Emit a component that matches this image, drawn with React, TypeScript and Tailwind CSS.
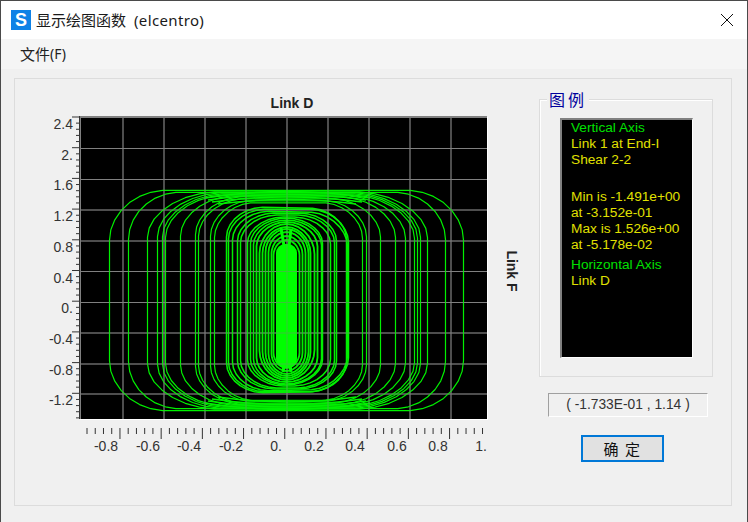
const CX = 286.5;

// left half width, right half width, top, bottom of each hysteresis loop
const LOOPS: number[][] = [
  [177, 177, 187, 414], [158, 159, 189, 412], [139, 141, 190, 411], [129, 134, 191, 410],
  [124, 131, 192, 409], [121, 128, 193, 408], [106, 119, 194, 407], [91, 109, 195, 406],
  [88, 94, 197, 405], [76, 80, 199, 403], [72, 76, 201, 402], [60, 62, 207, 393],
  [58, 60, 209, 392], [54, 61, 211, 391], [49, 50, 213, 389], [46, 48, 215, 388],
  [39, 44, 217, 386], [36, 36, 218, 385], [33, 35, 220, 384], [30, 31, 222, 382],
  [27, 28, 224, 380], [24, 24, 227, 378], [21, 22, 229, 376], [18, 19, 232, 374],
  [15, 16, 236, 371], [13, 13, 240, 368],
];

function corner(a: number) {
  const rx = a < 36 ? a : a > 150 ? 0.3 * a : Math.max(36, 0.48 * a);
  const ry = a < 30 ? a : a > 65 ? Math.min(50, 18 + 0.16 * a) : 16 + 0.2 * a;
  // x offset from the centre and drop from the top edge, going outwards
  return Array.from({ length: 8 }, (_, i) => {
    const t = (i / 7) * (Math.PI / 2);
    const x = a - rx + rx * Math.sin(t);
    return [x, ry * (1 - Math.cos(t)) + 7 * (x / a) * (x / a) * (a > 60 ? 1 : 0.3)];
  });
}

function loopPath([aL, aR, top, bottom]: number[]) {
  const pts: string[] = [];
  const add = (x: number, y: number) => pts.push(x.toFixed(1) + " " + y.toFixed(1));
  const right = corner(aR);
  const left = corner(aL);
  right.forEach(([x, d]) => add(CX + x, top + d));
  [...right].reverse().forEach(([x, d]) => add(CX + x, bottom - d));
  left.forEach(([x, d]) => add(CX - x, bottom - d));
  [...left].reverse().forEach(([x, d]) => add(CX - x, top + d));
  return "M" + pts.join("L") + "Z";
}

const GRID_X = [123, 164, 205, 246, 287, 328, 369, 410, 451];
const GRID_Y = [148.5, 179.5, 210, 241, 271.5, 302.5, 333, 364, 394];
const Y_LABELS = ["2.4", "2.", "1.6", "1.2", "0.8", "0.4", "0.", "-0.4", "-0.8", "-1.2"];
const X_LABELS = ["-0.8", "-0.6", "-0.4", "-0.2", "0.", "0.2", "0.4", "0.6", "0.8", "1."];
const X_POS = [106, 148, 189, 231, 276, 314, 355, 397, 438, 481];

function Chart() {
  const yTicks = Array.from({ length: 50 }, (_, i) => 117 + i * 6.14);
  const xTicks = Array.from({ length: 49 }, (_, i) => 87 + i * 8.24);
  const font = { fontFamily: "'Liberation Sans', Arial, sans-serif" };
  return (
    <svg width="520" height="390" viewBox="15 79 520 390" className="shrink-0" style={font}>
      <text x="292" y="108" textAnchor="middle" fontSize="14" fontWeight="700" fill="#222">Link D</text>
      <text x="507" y="271" textAnchor="middle" fontSize="14" fontWeight="700" fill="#222" transform="rotate(90 507 271)">Link F</text>

      <rect x="80" y="117" width="408" height="303" fill="#fff" />
      <rect x="79" y="116" width="408" height="303" fill="#808080" />
      <rect x="81" y="118" width="406" height="301" fill="#000" />

      <g stroke="#808080" strokeWidth="1">
        {GRID_X.map((x) => <line key={x} x1={x} x2={x} y1="118" y2="419" />)}
        {GRID_Y.map((y) => <line key={y} x1="81" x2="487" y1={y} y2={y} />)}
      </g>

      <g fill="none" stroke="#00f000" strokeLinejoin="round">
        {LOOPS.map((l, i) => (
          <path key={i} d={loopPath(l)} strokeWidth={l[0] > 65 ? 1.2 : l[0] > 30 ? 1.5 : 1.8} />
        ))}
      </g>
      <g fill="none" stroke="#00f000" strokeWidth="1.5">
        <path d="M205 198Q287 185 370 198" />
        <path d="M208 200Q287 189 366 200" />
        <path d="M212 202Q287 192 362 202" />
        <path d="M218 204Q287 195 356 204" />
        <path d="M205 403Q287 416 370 403" />
        <path d="M208 401Q287 413 366 401" />
        <path d="M212 399Q287 410 362 399" />
        <path d="M218 397Q287 407 356 397" />
      </g>
      <rect x="276" y="244" width="21" height="124" rx="9" fill="#00ff00" />
      <path d="M281 228L284 246M291 229L289 246M283 372L285 358M291 372L289 358" stroke="#00ff00" strokeWidth="3" />

      <g stroke="#808080" strokeWidth="1" opacity="0.45">
        {GRID_X.map((x) => <line key={x} x1={x} x2={x} y1="118" y2="419" />)}
        {GRID_Y.map((y) => <line key={y} x1="81" x2="487" y1={y} y2={y} />)}
      </g>

      <g stroke="#333" strokeWidth="1">
        <line x1="79.5" x2="79.5" y1="116" y2="419" />
        {yTicks.map((y, i) => <line key={i} x1={i % 5 === 0 ? 72 : 76} x2="79" y1={y} y2={y} />)}
        {xTicks.map((x, i) => <line key={i} x1={x} x2={x} y1="428" y2={(i + 1) % 5 === 0 ? 439 : 434} />)}
      </g>

      <g fontSize="14" fill="#333">
        {Y_LABELS.map((t, i) => <text key={t} x="73" y={129 + i * 30.7} textAnchor="end">{t}</text>)}
        {X_LABELS.map((t, i) => <text key={t} x={X_POS[i]} y="451" textAnchor="middle">{t}</text>)}
      </g>
    </svg>
  );
}

export default function App() {
  return (
    <div className="w-[748px] h-[522px] overflow-hidden flex flex-col bg-[#f0f0f0] border-x border-t border-[#4a4a4a] font-['Noto_Sans','Noto_Sans_CJK_SC',sans-serif] text-[#1a1a1a]">
      <div className="h-[38px] shrink-0 bg-white flex items-center pl-[10px]">
        <div className="w-[20px] h-[20px] bg-[#0f82e6] text-white flex items-center justify-center text-[18px] font-bold font-['Liberation_Sans',sans-serif]">S</div>
        <span className="ml-[5px] text-[15px] leading-none">显示绘图函数</span>
        <span className="ml-[8px] text-[15px] leading-none tracking-[0.35px]">(elcentro)</span>
        <svg width="14" height="14" viewBox="0 0 14 14" className="ml-auto mr-[13px]" stroke="#111" strokeWidth="1" fill="none">
          <path d="M1 1L13 13M13 1L1 13" />
        </svg>
      </div>

      <div className="h-[30px] shrink-0 bg-[#f5f5f5] flex items-center pl-[19px] text-[15px] leading-none text-[#222]">
        文件<span className="text-[14px]">(F)</span>
      </div>

      <div className="ml-[13px] mt-[9px] w-[718px] h-[428px] shrink-0 border border-[#dcdcdc] flex">
        <Chart />
        <div className="ml-[4px] w-[174px] flex flex-col font-['Liberation_Sans','Noto_Sans_CJK_SC',sans-serif]">
          <div className="relative mt-[20px] h-[278px] border border-[#dcdcdc] shadow-[inset_1px_1px_0_#fff]">
            <span className="absolute left-[7px] top-[-11px] bg-[#f0f0f0] px-[2px] text-[16px] leading-[20px] tracking-[3px] text-[#00009c] font-['Noto_Sans_CJK_SC',sans-serif]">图例</span>
            <div className="ml-[20px] mt-[18px] w-[133px] h-[240px] bg-black border-t-2 border-l-2 border-t-[#808080] border-l-[#808080] border-b border-r border-b-white border-r-white pl-[9px] text-[13.7px] leading-[16px] text-[#e0e000]">
              <div className="text-[#00e000]">Vertical Axis</div>
              <div>Link 1 at End-I</div>
              <div>Shear 2-2</div>
              <div className="mt-[21px]">Min is -1.491e+00</div>
              <div>at -3.152e-01</div>
              <div>Max is 1.526e+00</div>
              <div>at -5.178e-02</div>
              <div className="mt-[4px] text-[#00e000]">Horizontal Axis</div>
              <div>Link D</div>
            </div>
          </div>
          <div className="mt-[16px] ml-[9px] w-[160px] h-[24px] border-t border-l border-t-[#a0a0a0] border-l-[#a0a0a0] border-b border-r border-b-white border-r-white flex items-center justify-center text-[13.8px] text-[#333] whitespace-pre">
            ( -1.733E-01 , 1.14 )
          </div>
          <button className="mt-[18px] ml-[42px] w-[83px] h-[27px] border-2 border-[#0078d7] bg-[#e1e1e1] text-[15px] leading-none tracking-[1.5px] text-[#111] font-['Noto_Sans_CJK_SC',sans-serif]">
            确 定
          </button>
        </div>
      </div>
    </div>
  );
}
